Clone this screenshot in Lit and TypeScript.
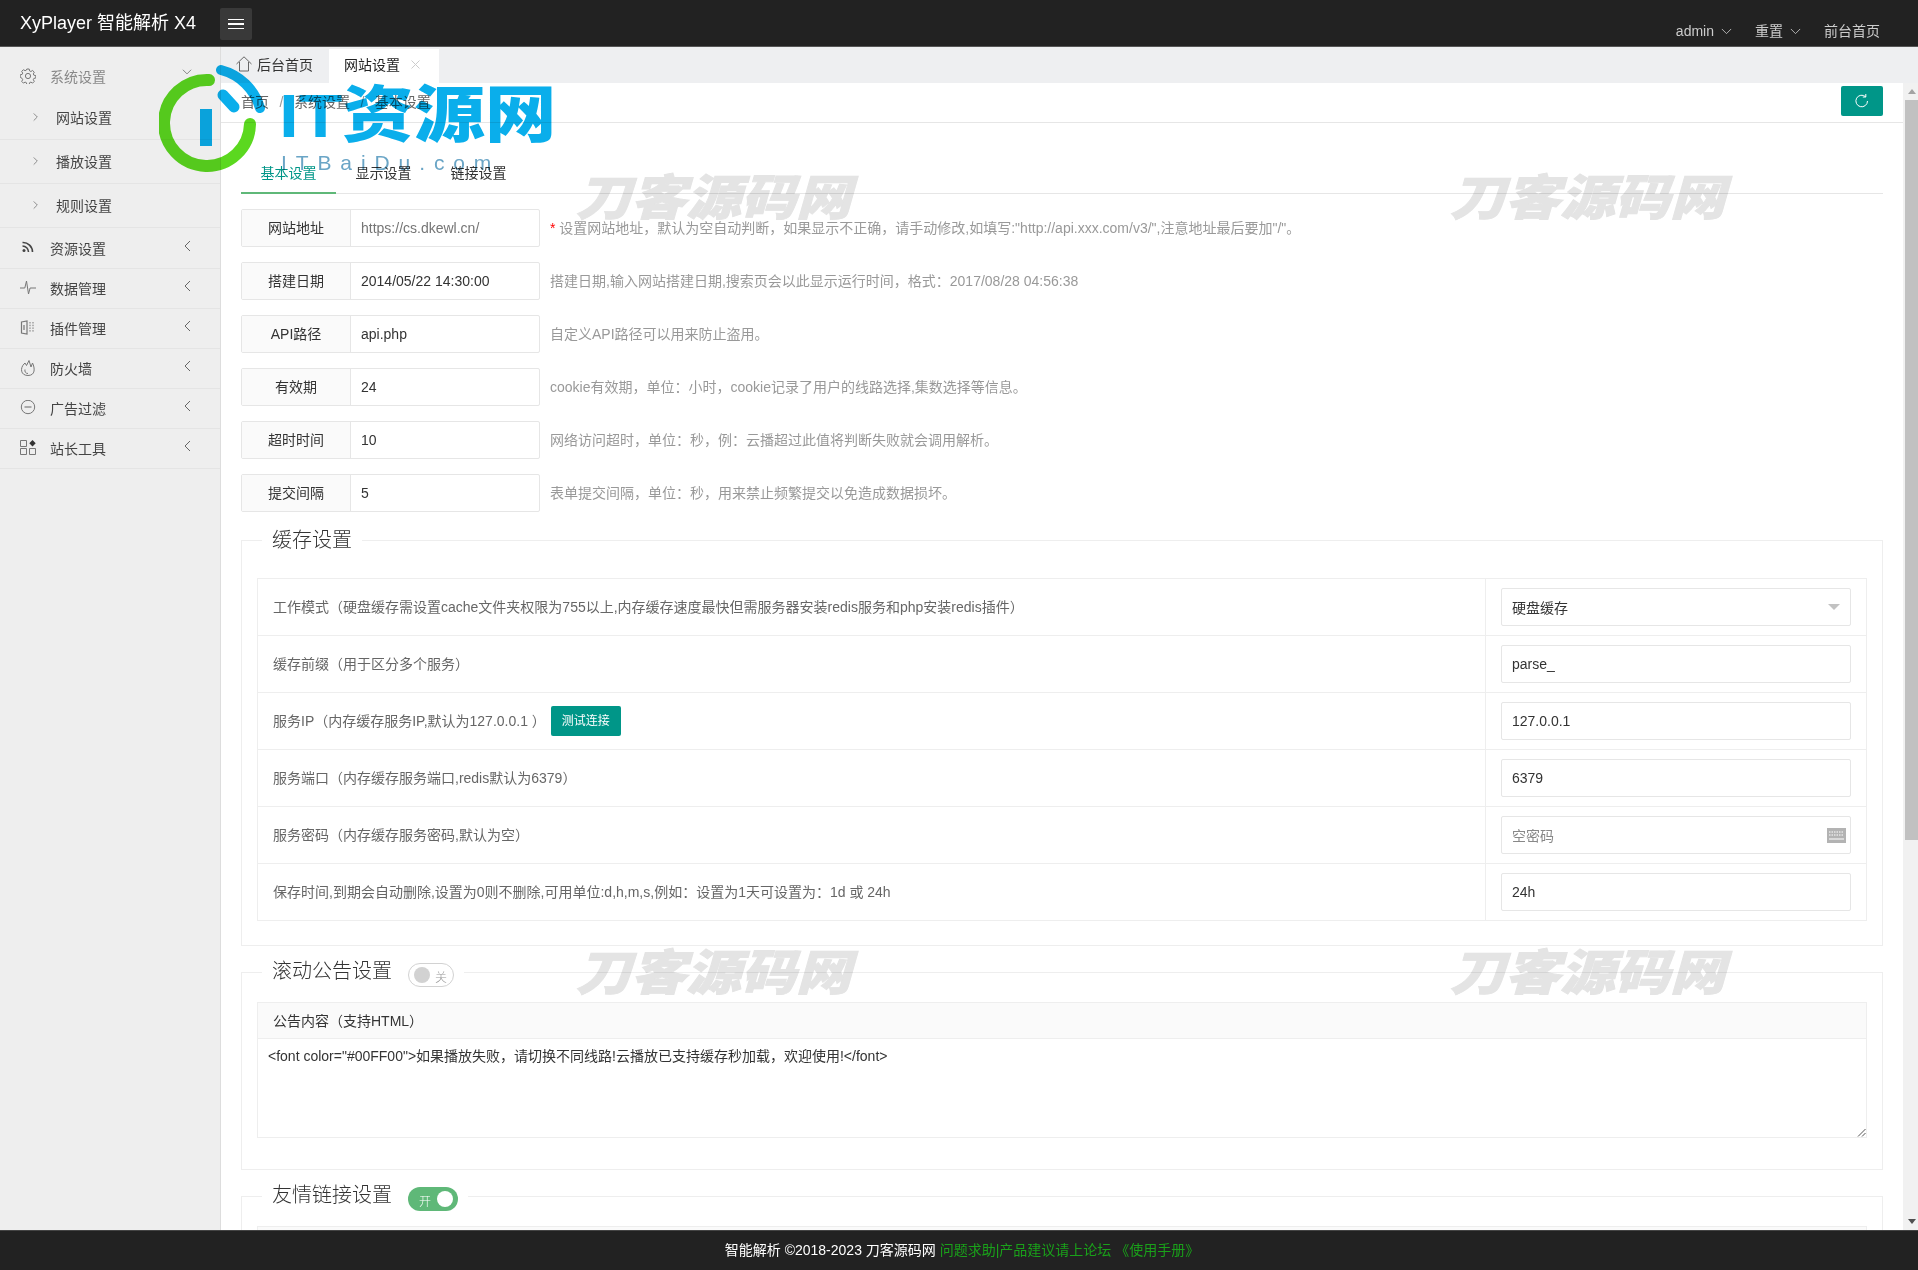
import { LitElement, html, css, svg } from "lit";
import { customElement } from "lit/decorators.js";

const icons: Record<string, unknown> = {
    gear: svg`<circle cx="8" cy="8" r="2.6"/><path d="M6.8 1h2.4l.4 1.9 1.3.6 1.7-1 1.7 1.7-1 1.7.6 1.3 1.9.4v2.4l-1.9.4-.6 1.3 1 1.7-1.7 1.7-1.7-1-1.3.6-.4 1.9H6.8l-.4-1.9-1.3-.6-1.7 1-1.7-1.7 1-1.7-.6-1.3L.2 9.2V6.8l1.9-.4.6-1.3-1-1.7 1.7-1.7 1.7 1 1.3-.6z"/>`,
    rss: svg`<circle cx="4" cy="10.5" r="1.5" fill="#444" stroke="none"/><path d="M2.5 6a6 6 0 0 1 6 6M2.5 2.5a9.5 9.5 0 0 1 10 9.5" stroke="#444" stroke-width="1.6"/>`,
    pulse: svg`<path d="M0 8h4.8l1.7-7 2 13 1.6-6H16"/>`,
    plugin: svg`<path d="M1.5 2 7 1v13l-5.500-1zM4 5v5" stroke-width="1.2"/><path d="M10 2v10M13 2v10" stroke-dasharray="1.500 1.200"/>`,
    fire: svg`<path d="M4 4C0 8 .5 15.500 8 15.500S15 8 12.500 3L11 7 9 .5 6.500 5.500 5 3zM5 9.500c-.5 2 .5 4 3 4"/>`,
    minus: svg`<circle cx="8" cy="7" r="6.700"/><path d="M4.500 7h7" stroke="#aaa" stroke-width="2"/>`,
    apps: svg`<path d="M.5.5h6v6h-6zM.5 8.500h6v6h-6zM9.500 8.500h6v6h-6z"/><path d="m12.500 0 3.200 3.200-3.200 3.200-3.200-3.200z" fill="#333" stroke="none"/>`,
    home: svg`<path d="M.5 8 8 .8 15.500 8M3.500 6v9h9V6"/>`,
    refresh: svg`<path d="M13.500 8A5.800 5.800 0 1 1 11.700 3.800"/><path d="M11.800 1v3h-3"/>`,
};

const icon = (name: string, cls = "icon") =>
    html`<svg class=${cls} viewBox="0 0 16 16" fill="none" stroke="currentColor" stroke-width="1">${icons[name]}</svg>`;

const chevron = (dir: "left" | "right" | "down", cls = "chev") => {
    const d = dir === "left" ? "M6 1 1 6l5 5" : dir === "right" ? "M1 1l5 5-5 5" : "M1 1l5.5 5.5L12 1";
    return html`<svg class="${cls} ${dir}" viewBox="${dir === "down" ? "0 0 13 8" : "0 0 7 12"}" fill="none" stroke="currentColor" stroke-width="1">
    <path d=${d}></path>
  </svg>`;
};

const menu = [
    ["rss", "资源设置"],
    ["pulse", "数据管理"],
    ["plugin", "插件管理"],
    ["fire", "防火墙"],
    ["minus", "广告过滤"],
    ["apps", "站长工具"],
];

const basics = [
    ["网站地址", "https://cs.dkewl.cn/", `设置网站地址，默认为空自动判断，如果显示不正确，请手动修改,如填写:"http://api.xxx.com/v3/",注意地址最后要加"/"。`],
    ["搭建日期", "2014/05/22 14:30:00", "搭建日期,输入网站搭建日期,搜索页会以此显示运行时间，格式：2017/08/28 04:56:38"],
    ["API路径", "api.php", "自定义API路径可以用来防止盗用。"],
    ["有效期", "24", "cookie有效期，单位：小时，cookie记录了用户的线路选择,集数选择等信息。"],
    ["超时时间", "10", "网络访问超时，单位：秒，例：云播超过此值将判断失败就会调用解析。"],
    ["提交间隔", "5", "表单提交间隔，单位：秒，用来禁止频繁提交以免造成数据损坏。"],
];

@customElement("app-root")
export class AppRoot extends LitElement {
    static styles = css`
    :host {
      display: block;
      height: 100vh;
      font-family: "Liberation Sans", "Noto Sans CJK SC", sans-serif;
      font-size: 14px;
      color: #333;
    }

    .app {
      position: relative;
      display: flex;
      flex-direction: column;
      height: 100%;
      overflow: hidden;
      background: #fff;
    }

    /* top bar */
    .top {
      flex: none;
      height: 47px;
      box-sizing: border-box;
      display: flex;
      background: #222;
      border-bottom: 1px solid #555;
      color: #fff;
    }

    .brand {
      width: 220px;
      padding-left: 20px;
      box-sizing: border-box;
      font-size: 18px;
      line-height: 46px;
    }

    .burger {
      width: 32px;
      height: 32px;
      margin-top: 8px;
      border-radius: 2px;
      background: #393939;
      display: flex;
      flex-direction: column;
      justify-content: center;
      gap: 3px;
      padding-left: 8px;
      box-sizing: border-box;
    }

    .burger i {
      display: block;
      width: 16px;
      height: 1.5px;
      background: #fff;
    }

    .top-right {
      margin-left: auto;
      padding: 21px 38px 0 0;
      display: flex;
      align-items: flex-start;
      gap: 23px;
      color: #ccc;
      line-height: 20px;
    }

    .top-right span {
      display: flex;
      align-items: center;
      gap: 7px;
    }

    .top-right .chev {
      width: 11px;
      height: 7px;
    }

    /* layout */
    .body {
      flex: 1;
      min-height: 0;
      display: flex;
    }

    .side {
      flex: none;
      width: 221px;
      box-sizing: border-box;
      padding-top: 9px;
      background: #eee;
      border-right: 1px solid #ddd;
    }

    .main {
      flex: 1;
      min-width: 0;
      display: flex;
      flex-direction: column;
    }

    /* sidebar */
    .item {
      height: 40px;
      box-sizing: border-box;
      display: flex;
      align-items: center;
      padding-left: 20px;
      padding-bottom: 2px;
      border-bottom: 1px solid #e4e4e4;
      color: #444;
    }

    .item.open {
      border-bottom: 0;
      padding-bottom: 0;
      color: #888;
    }

    .sub + .item {
      margin-top: 1px;
    }

    .icon {
      width: 16px;
      height: 16px;
      flex: none;
      margin-right: 14px;
      color: #777;
    }

    .item .chev {
      margin-left: auto;
      margin-right: 29px;
      width: 7px;
      height: 12px;
      color: #666;
      transform: translateY(-2px);
    }

    .item .chev.down {
      width: 10px;
      height: 6px;
      margin-right: 28px;
      transform: translateY(-4px);
    }

    .sub {
      height: 44px;
      box-sizing: border-box;
      display: flex;
      align-items: center;
      padding: 0 0 2px 33px;
      gap: 18px;
      border-bottom: 1px solid #e4e4e4;
      color: #444;
    }

    .sub .chev {
      width: 5px;
      height: 10px;
      color: #666;
    }

    /* page tabs */
    .pages {
      flex: none;
      height: 36px;
      display: flex;
      align-items: flex-end;
      background: #eeeff1;
      color: #333;
    }

    .page {
      height: 34px;
      padding-bottom: 4px;
      display: flex;
      align-items: center;
      box-sizing: border-box;
    }

    .page.home {
      width: 108px;
      padding-left: 15px;
      gap: 5px;
    }

    .page.home .icon {
      margin: 0;
      color: #666;
    }

    .page.on {
      width: 110px;
      padding-left: 15px;
      background: #fff;
      justify-content: space-between;
      padding-right: 19px;
      color: #222;
    }

    .close {
      width: 9px;
      height: 9px;
      color: #ccc;
    }

    .view {
      flex: 1;
      min-height: 0;
      display: flex;
    }

    .scroll {
      flex: 1;
      min-width: 0;
      overflow: hidden;
    }

    .bar {
      flex: none;
      width: 15px;
      background: #f1f1f1;
      display: flex;
      flex-direction: column;
      align-items: flex-end;
    }

    .bar .up,
    .bar .dn {
      width: 13px;
      height: 17px;
      display: flex;
      align-items: center;
      justify-content: center;
    }

    .bar .up i,
    .bar .dn i {
      border: 4px solid transparent;
      border-bottom: 5px solid #a3a3a3;
      border-top: 0;
    }

    .bar .dn i {
      border-bottom: 0;
      border-top: 5px solid #505050;
    }

    .bar .thumb {
      width: 13px;
      height: 740px;
      background: #c1c1c1;
    }

    .bar .dn {
      margin-top: auto;
    }

    /* crumbs */
    .crumbs {
      height: 40px;
      box-sizing: border-box;
      display: flex;
      align-items: flex-start;
      padding: 0 20px 0 20px;
      border-bottom: 1px solid #e6e6e6;
      color: #666;
      line-height: 38px;
    }

    .crumbs em {
      font-style: normal;
      margin: 0 10.5px;
      color: #999;
    }

    .refresh {
      margin: 3px 0 0 auto;
      width: 42px;
      height: 30px;
      border-radius: 2px;
      background: #009688;
      color: #fff;
      display: flex;
      align-items: center;
      justify-content: center;
    }

    .refresh svg {
      width: 16px;
      height: 16px;
      margin: 0;
      color: #fff;
    }

    .content {
      padding: 30px 20px 0;
    }

    .tabs {
      display: flex;
      height: 41px;
      box-sizing: border-box;
      border-bottom: 1px solid #e6e6e6;
    }

    .tab {
      width: 95px;
      height: 41px;
      line-height: 40px;
      box-sizing: border-box;
      text-align: center;
      color: #333;
    }

    .tab.on {
      color: #009688;
      border-bottom: 2px solid #5fb878;
    }

    .rows {
      padding-top: 15px;
      display: flex;
      flex-direction: column;
      gap: 15px;
    }

    .row {
      display: flex;
      align-items: center;
    }

    .group {
      display: flex;
      width: 299px;
      height: 38px;
      box-sizing: border-box;
      border: 1px solid #e6e6e6;
      border-radius: 2px;
      flex: none;
    }

    .group label {
      width: 108px;
      flex: none;
      text-align: center;
      line-height: 36px;
      background: #fafafa;
      border-right: 1px solid #e6e6e6;
    }

    .group div {
      padding-left: 10px;
      line-height: 36px;
    }

    .group div.ph {
      color: #757575;
    }

    .help {
      margin-left: 10px;
      padding-bottom: 2px;
      color: #999;
    }

    .help b {
      color: #f00;
      font-weight: 400;
    }

    /* fieldsets */
    fieldset {
      margin: 0;
      padding: 0 15px;
      border: 1px solid #eee;
      min-width: 0;
    }

    legend {
      margin-left: 5px;
      padding: 0 10px;
      height: 30px;
      display: flex;
      align-items: flex-end;
      gap: 16px;
      font-size: 20px;
      line-height: 30px;
      color: #333;
      font-weight: 300;
    }

    legend span {
      align-self: flex-start;
      line-height: 29px;
    }

    .cache legend span {
      line-height: 31px;
    }

    .cache {
      margin-top: 13px;
      padding-top: 23px;
      padding-bottom: 24px;
    }

    .notice {
      margin-top: 11px;
      padding-top: 15px;
      padding-bottom: 31px;
    }

    .links {
      margin-top: 11px;
      padding-top: 15px;
    }

    .toggle {
      height: 24px;
      box-sizing: border-box;
      border-radius: 20px;
      display: flex;
      align-items: center;
      font-size: 12px;
      line-height: 14px;
    }

    .toggle i {
      width: 16px;
      height: 16px;
      border-radius: 50%;
      display: block;
    }

    .toggle span {
      align-self: center;
      line-height: 14px;
      padding-top: 5px;
    }

    .toggle.off {
      width: 46px;
      padding-left: 5px;
      gap: 5px;
      border: 1px solid #d2d2d2;
      color: #999;
    }

    .toggle.off i {
      background: #d2d2d2;
    }

    .toggle.on {
      width: 50px;
      padding-left: 11px;
      gap: 6px;
      background: #5fb878;
      color: #fff;
    }

    .toggle.on i {
      background: #fff;
    }

    .table {
      border: 1px solid #eee;
      border-bottom: 0;
    }

    .tr {
      height: 57px;
      box-sizing: border-box;
      display: flex;
      border-bottom: 1px solid #eee;
    }

    .td {
      flex: 1;
      display: flex;
      align-items: center;
      gap: 5px;
      padding-left: 15px;
      color: #666;
    }

    .td > span {
      padding-bottom: 3px;
    }

    .cell {
      flex: none;
      width: 381px;
      box-sizing: border-box;
      border-left: 1px solid #eee;
      padding: 9px 15px;
    }

    .input {
      height: 38px;
      box-sizing: border-box;
      border: 1px solid #e6e6e6;
      border-radius: 2px;
      padding-left: 10px;
      display: flex;
      align-items: center;
      justify-content: space-between;
      color: #333;
    }

    .input.ph {
      color: #888;
    }

    .caret {
      margin-right: 10px;
      border: 6px solid transparent;
      border-top-color: #c2c2c2;
      border-bottom: 0;
    }

    .kbd {
      width: 19px;
      height: 15px;
      margin-right: 4px;
      color: #b3b3b3;
    }

    .btn {
      width: 70px;
      height: 30px;
      border-radius: 2px;
      background: #009688;
      color: #fff;
      font-size: 12px;
      line-height: 30px;
      text-align: center;
    }

    .head {
      height: 37px;
      box-sizing: border-box;
      padding-left: 15px;
      line-height: 36px;
      background: #fafafa;
      border: 1px solid #eee;
      color: #333;
    }

    .area {
      height: 99px;
      box-sizing: border-box;
      position: relative;
      padding: 5px 10px;
      line-height: 24px;
      border: 1px solid #eee;
      border-top: 0;
      color: #333;
    }

    .grip {
      position: absolute;
      right: 0;
      bottom: 0;
      width: 9px;
      height: 9px;
      color: #555;
    }

    .stub {
      height: 40px;
      background: #fafafa;
      border: 1px solid #eee;
    }

    .foot {
      flex: none;
      height: 40px;
      box-sizing: border-box;
      background: #222;
      border-top: 1px solid #444;
      color: #fff;
      text-align: center;
      padding-left: 6px;
      line-height: 39px;
    }

    .foot a {
      color: #1aa11a;
    }

    /* stamps over the page */
    .mark {
      position: absolute;
      font-size: 55px;
      line-height: 60px;
      width: 276px;
      white-space: nowrap;
      font-weight: 900;
      font-style: italic;
      color: #e4e4e4;
      -webkit-text-stroke: 1px #e4e4e4;
      transform: scaleY(0.88);
      mix-blend-mode: multiply;
      pointer-events: none;
    }

    .logo {
      position: absolute;
      left: 159px;
      top: 62px;
      width: 400px;
      height: 115px;
      mix-blend-mode: multiply;
      pointer-events: none;
    }

    .logo svg {
      position: absolute;
      left: 0;
      top: 0;
      width: 108px;
      height: 112px;
    }

    .logo .big {
      position: absolute;
      left: 120px;
      top: 23px;
      font-size: 62px;
      line-height: 62px;
      font-weight: 900;
      color: #0aaeeb;
      white-space: nowrap;
      transform: scaleX(1.15);
      transform-origin: left center;
    }

    .logo .small {
      position: absolute;
      left: 122px;
      top: 89px;
      font-size: 21px;
      line-height: 24px;
      letter-spacing: 8.9px;
      color: #6aa5c6;
      white-space: nowrap;
    }
  `;

    render() {
        const marks = [
            [576, 168],
            [1450, 168],
            [576, 943],
            [1450, 943],
        ];
        return html`
      <div class="app">
        <div class="top">
          <div class="brand">XyPlayer 智能解析 X4</div>
          <div class="burger"><i></i><i></i><i></i></div>
          <div class="top-right">
            <span>admin ${chevron("down")}</span>
            <span>重置 ${chevron("down")}</span>
            <span>前台首页</span>
          </div>
        </div>

        <div class="body">
          <div class="side">
            <div class="item open">${icon("gear")}系统设置 ${chevron("down")}</div>
            ${["网站设置", "播放设置", "规则设置"].map(
                (t) => html`<div class="sub">${chevron("right")}${t}</div>`
            )}
            ${menu.map(
                ([i, t]) => html`<div class="item">${icon(i)}${t} ${chevron("left")}</div>`
            )}
          </div>

          <div class="main">
            <div class="pages">
              <div class="page home">${icon("home")}后台首页</div>
              <div class="page on">
                网站设置
                <svg class="close" viewBox="0 0 9 9" fill="none" stroke="currentColor"><path d="m0.5 0.5 8 8M8.5 0.5l-8 8"></path></svg>
              </div>
            </div>
            <div class="view">
              <div class="scroll">
                <div class="crumbs">
                  首页<em>/</em>系统设置<em>/</em>基本设置
                  <div class="refresh">${icon("refresh")}</div>
                </div>
                <div class="content">
                  <div class="tabs">
                    <div class="tab on">基本设置</div>
                    <div class="tab">显示设置</div>
                    <div class="tab">链接设置</div>
                  </div>
                  <div class="rows">
                    ${basics.map(
                        ([l, v, h], i) => html`
                        <div class="row">
                          <div class="group">
                            <label>${l}</label>
                            <div class=${i === 0 ? "ph" : ""}>${v}</div>
                          </div>
                          <div class="help">${i === 0 ? html`<b>*</b> ` : ""}${h}</div>
                        </div>
                      `
                    )}
                  </div>

                  <fieldset class="cache">
                    <legend><span>缓存设置</span></legend>
                    <div class="table">
                      <div class="tr">
                        <div class="td"><span>工作模式（硬盘缓存需设置cache文件夹权限为755以上,内存缓存速度最快但需服务器安装redis服务和php安装redis插件）</span></div>
                        <div class="cell"><div class="input">硬盘缓存<i class="caret"></i></div></div>
                      </div>
                      <div class="tr">
                        <div class="td"><span>缓存前缀（用于区分多个服务）</span></div>
                        <div class="cell"><div class="input">parse_</div></div>
                      </div>
                      <div class="tr">
                        <div class="td"><span>服务IP（内存缓存服务IP,默认为127.0.0.1 ）</span><div class="btn">测试连接</div></div>
                        <div class="cell"><div class="input">127.0.0.1</div></div>
                      </div>
                      <div class="tr">
                        <div class="td"><span>服务端口（内存缓存服务端口,redis默认为6379）</span></div>
                        <div class="cell"><div class="input">6379</div></div>
                      </div>
                      <div class="tr">
                        <div class="td"><span>服务密码（内存缓存服务密码,默认为空）</span></div>
                        <div class="cell">
                          <div class="input ph">
                            空密码
                            <svg class="kbd" viewBox="0 0 19 15">
                              <rect width="19" height="15" fill="currentColor"></rect>
                              <path d="M2 4h15M2 7h15" stroke="#fff" stroke-dasharray="1.5 1"></path>
                              <path d="M2 11h15" stroke="#fff"></path>
                            </svg>
                          </div>
                        </div>
                      </div>
                      <div class="tr">
                        <div class="td"><span>保存时间,到期会自动删除,设置为0则不删除,可用单位:d,h,m,s,例如：设置为1天可设置为：1d 或 24h</span></div>
                        <div class="cell"><div class="input">24h</div></div>
                      </div>
                    </div>
                  </fieldset>

                  <fieldset class="notice">
                    <legend>
                      <span>滚动公告设置</span>
                      <div class="toggle off"><i></i><span>关</span></div>
                    </legend>
                    <div class="head">公告内容（支持HTML）</div>
                    <div class="area">
                      &lt;font color="#00FF00"&gt;如果播放失败，请切换不同线路!云播放已支持缓存秒加载，欢迎使用!&lt;/font&gt;
                      <svg class="grip" viewBox="0 0 9 9" fill="none" stroke="currentColor"><path d="M8.5 1 1 8.5M8.5 5 5 8.5"></path></svg>
                    </div>
                  </fieldset>

                  <fieldset class="links">
                    <legend>
                      <span>友情链接设置</span>
                      <div class="toggle on"><span>开</span><i></i></div>
                    </legend>
                    <div class="stub"></div>
                  </fieldset>
                </div>
              </div>
              <div class="bar">
                <div class="up"><i></i></div>
                <div class="thumb"></div>
                <div class="dn"><i></i></div>
              </div>
            </div>
          </div>
        </div>

        <div class="foot">智能解析 ©2018-2023 刀客源码网 <a>问题求助|产品建议请上论坛 《使用手册》</a></div>

        ${marks.map(
            ([x, y]) => html`<div class="mark" style="left:${x}px;top:${y}px">刀客源码网</div>`
        )}
        <div class="logo">
          <svg viewBox="0 0 108 112" fill="none" stroke-linecap="round">
            <path d="M50 18A43 43 0 1 0 91 62" stroke="#5bd81f" stroke-width="12"></path>
            <path d="M62 8A55 55 0 0 1 101 46" stroke="#0aaeeb" stroke-width="10"></path>
            <path d="M64 33 75 45" stroke="#0aaeeb" stroke-width="11"></path>
            <path d="M47 47V84" stroke="#0aaeeb" stroke-width="12" stroke-linecap="butt"></path>
          </svg>
          <div class="big">IT资源网</div>
          <div class="small">ITBaiDu.com</div>
        </div>
      </div>
    `;
    }
}
